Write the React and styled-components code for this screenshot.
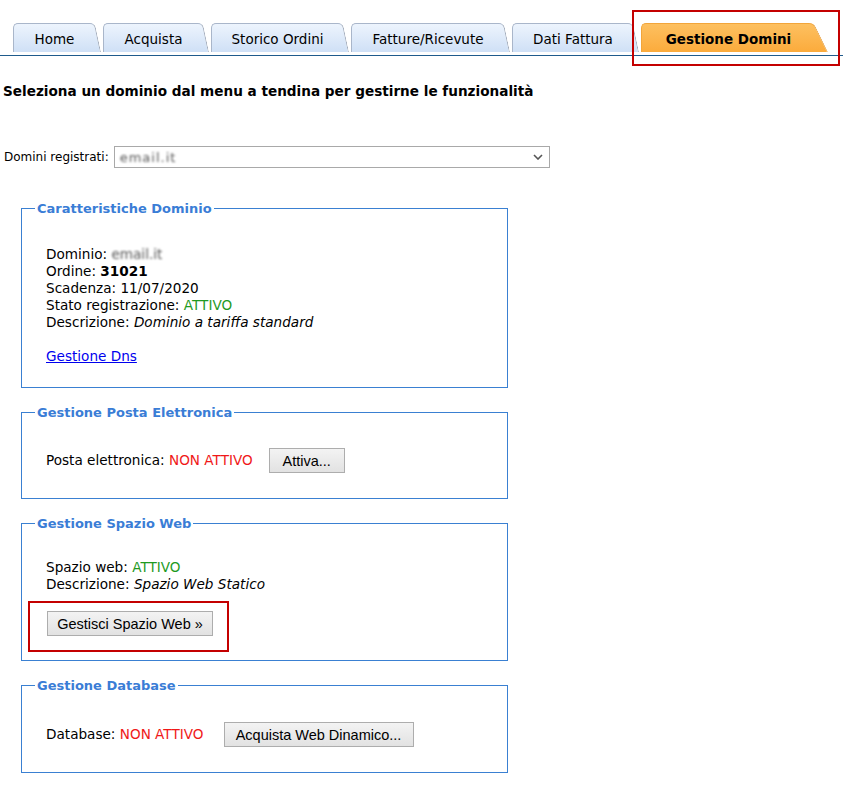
import React from 'react';
import styled, { createGlobalStyle } from 'styled-components';

const GlobalStyle = createGlobalStyle`
  html, body {
    margin: 0;
    padding: 0;
    background: #fff;
  }
  body {
    font-family: "DejaVu Sans", Verdana, sans-serif;
    font-size: 13.6px;
    color: #000;
  }
`;

const Page = styled.div`
  width: 843px;
  min-height: 801px;
`;

const TabBar = styled.div`
  position: relative;
  display: flex;
  align-items: flex-end;
  gap: 2px;
  box-sizing: border-box;
  height: 56px;
  padding: 0 0 3px 13px;
  border-bottom: 1px solid #1f5b8c;
`;

const Tab = styled.div`
  position: relative;
  z-index: 0;
  box-sizing: border-box;
  width: ${p => p.$w}px;
  height: 29px;
  display: flex;
  align-items: center;
  justify-content: center;
  padding: 2px ${p => (p.$active ? 12 : 5)}px 0 0;
  font-size: 13.5px;
  font-weight: ${p => (p.$active ? 700 : 400)};
  white-space: nowrap;

  &::before,
  &::after {
    content: "";
    position: absolute;
    z-index: -1;
    top: 0;
    bottom: 0;
    background: ${p =>
      p.$active
        ? 'linear-gradient(#fdc060, #fbab3c)'
        : 'linear-gradient(#edf4fd, #cfe0f6)'};
    border-top: 1px solid ${p => (p.$active ? '#f2a53a' : '#a9b6ca')};
  }

  &::before {
    left: 0;
    right: ${p => (p.$active ? 20 : 12)}px;
    border-left: 1px solid ${p => (p.$active ? '#f2a53a' : '#a9b6ca')};
    border-top-left-radius: 5px;
  }

  &::after {
    right: 0;
    width: ${p => (p.$active ? 26 : 16)}px;
    border-right: 1px solid ${p => (p.$active ? '#e49a36' : '#9ea8b8')};
    border-top-right-radius: 5px;
    transform-origin: bottom right;
    transform: skewX(${p => (p.$active ? 26 : 12)}deg);
  }
`;

const Highlight = styled.div`
  box-sizing: border-box;
  border: 2px solid #c40000;
`;

const TabHighlight = styled(Highlight)`
  position: absolute;
  left: 632px;
  top: 10px;
  width: 208px;
  height: 56px;
  pointer-events: none;
`;

const Heading = styled.h1`
  margin: 27px 0 0 3px;
  font-size: 13.6px;
  line-height: 17px;
  font-weight: 700;
`;

const SelectRow = styled.div`
  display: flex;
  align-items: center;
  gap: 5px;
  margin: 46px 0 0 4px;
  font-size: 12px;
`;

const FakeSelect = styled.div`
  box-sizing: border-box;
  width: 436px;
  height: 22px;
  display: flex;
  align-items: center;
  justify-content: space-between;
  padding: 0 6px 0 5px;
  border: 1px solid #a9a9a9;
  background: #fff;
  font-size: 13px;
`;

const Blurred = styled.span`
  display: inline-block;
  color: #555;
  filter: blur(1.3px);
  letter-spacing: ${p => p.$ls || 0}px;
`;

const Sections = styled.div`
  display: flex;
  flex-direction: column;
  gap: 16px;
  margin: 32px 0 0 21px;
`;

const Fieldset = styled.fieldset`
  box-sizing: border-box;
  width: 487px;
  margin: 0;
  padding: 0 12px;
  border: 1px solid #3a80d2;
  min-width: 0;
`;

const Legend = styled.legend`
  margin-left: 1px;
  padding: 1px 2px 0;
  font-size: 13px;
  line-height: 15px;
  font-weight: 700;
  color: #3a7dd6;
`;

const Body = styled.div`
  padding: ${p => p.$top}px 0 ${p => p.$bottom}px 12px;
  line-height: 17px;
`;

const Row = styled.div`
  display: flex;
  align-items: center;
`;

const Status = styled.span`
  color: ${p => (p.$on ? '#1f9a1f' : '#f01818')};
`;

const Em = styled.em`
  font-style: italic;
`;

const Link = styled.a`
  color: #0000ee;
  text-decoration: underline;
  cursor: pointer;
`;

const Spacer = styled.div`
  height: ${p => p.$h}px;
`;

const Button = styled.button`
  box-sizing: border-box;
  width: ${p => p.$w}px;
  height: 25px;
  margin-left: ${p => p.$ml || 0}px;
  padding: 0;
  font-family: "Liberation Sans", Arial, sans-serif;
  font-size: 14.5px;
  color: #000;
  background: linear-gradient(#f3f3f3, #e2e2e2);
  border: 1px solid #adadad;
  border-radius: 0;
  cursor: pointer;
`;

const ButtonFrame = styled(Highlight)`
  display: inline-block;
  margin: 8px 0 0 -18px;
  padding: 8px 14px 14px 17px;
`;

const Chevron = () => (
  <svg width="10" height="6" viewBox="0 0 10 6">
    <path d="M1 1l4 4 4-4" fill="none" stroke="#555" strokeWidth="1.6" />
  </svg>
);

const tabs = [
  { label: 'Home', w: 88 },
  { label: 'Acquista', w: 106 },
  { label: 'Storico Ordini', w: 138 },
  { label: 'Fatture/Ricevute', w: 159 },
  { label: 'Dati Fattura', w: 127 },
  { label: 'Gestione Domini', w: 187, active: true },
];

export default function App() {
  return (
    <Page>
      <GlobalStyle />
      <TabBar>
        {tabs.map(t => (
          <Tab key={t.label} $w={t.w} $active={t.active}>
            {t.label}
          </Tab>
        ))}
        <TabHighlight />
      </TabBar>

      <Heading>Seleziona un dominio dal menu a tendina per gestirne le funzionalità</Heading>

      <SelectRow>
        <span>Domini registrati:</span>
        <FakeSelect>
          <Blurred $ls={1}>email.it</Blurred>
          <Chevron />
        </FakeSelect>
      </SelectRow>

      <Sections>
        <Fieldset>
          <Legend>Caratteristiche Dominio</Legend>
          <Body $top={30} $bottom={22}>
            <div>
              Dominio: <Blurred>email.it</Blurred>
            </div>
            <div>
              Ordine: <b>31021</b>
            </div>
            <div>Scadenza: 11/07/2020</div>
            <div>
              Stato registrazione: <Status $on>ATTIVO</Status>
            </div>
            <div>
              Descrizione: <Em>Dominio a tariffa standard</Em>
            </div>
            <Spacer $h={17} />
            <Link>Gestione Dns</Link>
          </Body>
        </Fieldset>

        <Fieldset>
          <Legend>Gestione Posta Elettronica</Legend>
          <Body $top={28} $bottom={25}>
            <Row>
              <span>
                Posta elettronica: <Status>NON ATTIVO</Status>
              </span>
              <Button $w={76} $ml={16}>Attiva...</Button>
            </Row>
          </Body>
        </Fieldset>

        <Fieldset>
          <Legend>Gestione Spazio Web</Legend>
          <Body $top={28} $bottom={8}>
            <div>
              Spazio web: <Status $on>ATTIVO</Status>
            </div>
            <div>
              Descrizione: <Em>Spazio Web Statico</Em>
            </div>
            <ButtonFrame>
              <Button $w={166}>Gestisci Spazio Web »</Button>
            </ButtonFrame>
          </Body>
        </Fieldset>

        <Fieldset>
          <Legend>Gestione Database</Legend>
          <Body $top={29} $bottom={25}>
            <Row>
              <span>
                Database: <Status>NON ATTIVO</Status>
              </span>
              <Button $w={190} $ml={20}>Acquista Web Dinamico...</Button>
            </Row>
          </Body>
        </Fieldset>
      </Sections>
    </Page>
  );
}
